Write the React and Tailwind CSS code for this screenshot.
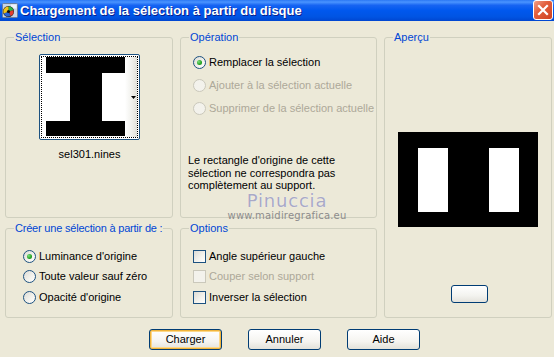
import React from "react";

const font = "font-['Liberation_Sans',Arial,sans-serif]";

function Radio({ checked, disabled }) {
  return (
    <span
      className={`relative flex h-[13px] w-[13px] shrink-0 items-center justify-center rounded-full border ${
        disabled
          ? "border-[#CAC8BB] bg-[#F3F2EC]"
          : "border-[#1C5180] bg-[linear-gradient(135deg,#DCDBD5_0%,#F4F3EE_60%,#FFFFFF_100%)]"
      }`}
    >
      {checked && (
        <span className="h-[5px] w-[5px] rounded-full bg-[radial-gradient(circle_at_35%_35%,#7CE07C_0%,#21A121_60%,#1B8A1B_100%)]" />
      )}
    </span>
  );
}

function Check({ disabled }) {
  return (
    <span
      className={`h-[13px] w-[13px] shrink-0 border ${
        disabled
          ? "border-[#CAC8BB] bg-[#F3F2EC]"
          : "border-[#1C5180] bg-[linear-gradient(135deg,#DCDBD5_0%,#F4F3EE_60%,#FFFFFF_100%)]"
      }`}
    />
  );
}

function Row({ children, label, disabled, className = "" }) {
  return (
    <div className={`flex h-[13px] items-center gap-[3px] ${className}`}>
      {children}
      <span className={`leading-[13px] ${disabled ? "text-[#ACA899]" : "text-black"}`}>{label}</span>
    </div>
  );
}

function Group({ title, className = "", titleClass = "", children }) {
  return (
    <div className={`relative rounded-[3px] border border-[#D0D0BF] ${className}`}>
      <span className={`absolute left-[8px] top-[-7px] bg-[#ECE9D8] px-[1px] leading-[13px] text-[#0046D5] ${titleClass}`}>
        {title}
      </span>
      {children}
    </div>
  );
}

function Btn({ children, def }) {
  return (
    <button
      className={`flex h-[21px] w-[73px] items-center justify-center rounded-[3px] border border-[#003C74] bg-[linear-gradient(to_bottom,#FFFFFF_0%,#F5F4F0_60%,#E3E2DA_100%)] leading-[13px] text-black ${
        def ? "shadow-[inset_0_0_0_1px_#F0B43C,inset_0_0_0_2px_#FDD889]" : ""
      }`}
    >
      {children}
    </button>
  );
}

export default function App() {
  return (
    <div className={`h-[357px] w-[554px] overflow-hidden bg-[#ECE9D8] text-[11px] ${font}`}>
      {/* Title bar */}
      <div className="flex h-[21px] items-start bg-[linear-gradient(to_bottom,#2B78F4_0%,#4A94FF_10%,#1764F2_25%,#0058EE_50%,#0054E3_80%,#0046D0_100%)]">
        <div className="mt-[3px] ml-[2px] h-[15px] w-[16px]">
          <svg width="16" height="15" viewBox="0 0 16 15">
            <rect x="0.5" y="0.5" width="15" height="14" rx="1" fill="#C8D4E6" stroke="#6A7E9E" />
            <rect x="9" y="1.5" width="5.5" height="4" fill="#EEF3FA" />
            <circle cx="6.5" cy="8.5" r="5.5" fill="#1A1A1A" />
            <path d="M6.5 8.5 L6.5 3.5 A5 5 0 0 1 11.3 7.2 Z" fill="#2DB54A" />
            <path d="M6.5 8.5 L11.3 7.2 A5 5 0 0 1 8.5 13.1 Z" fill="#E23C2E" />
            <path d="M6.5 8.5 L8.5 13.1 A5 5 0 0 1 1.8 10.5 Z" fill="#2A64D8" />
            <path d="M6.5 8.5 L1.8 10.5 A5 5 0 0 1 6.5 3.5 Z" fill="#F2C21A" />
            <circle cx="6.5" cy="8.5" r="1.6" fill="#111" />
          </svg>
        </div>
        <div className="ml-[2px] mt-[3px] flex-1 text-[13px] font-bold leading-[15px] tracking-[0px] text-white [text-shadow:1px_1px_0_#0A1E8C]">
          Chargement de la sélection à partir du disque
        </div>
        <div className="mr-[1px] flex h-[20px] w-[20px] items-center justify-center rounded-[3px] border border-white bg-[linear-gradient(135deg,#F0A08A_0%,#E2603E_40%,#D0401E_100%)]">
          <svg width="12" height="12" viewBox="0 0 12 12">
            <path d="M2 2 L10 10 M10 2 L2 10" stroke="white" strokeWidth="2.2" strokeLinecap="square" />
          </svg>
        </div>
      </div>

      {/* Body */}
      <div className="relative pl-[5px] pt-[16px]">
        <div className="grid grid-cols-[168px_197px_168px] grid-rows-[181px_90px] gap-x-[7px] gap-y-[10px]">
          {/* Sélection */}
          <Group title="Sélection" className="flex flex-col items-center pt-[16px]">
            <div className="ml-[1px] h-[86px] w-[101px] rounded-[2px] border border-[#1C5180] bg-white p-[1px]">
              <div className="flex h-full w-full border border-dotted border-black">
                <div className="ml-[4px] flex h-[79px] w-[79px] flex-col bg-white">
                  <div className="h-[16px] bg-black" />
                  <div className="flex h-[48px]">
                    <div className="w-[24px] bg-white" />
                    <div className="w-[32px] bg-black" />
                    <div className="w-[23px] bg-white" />
                  </div>
                  <div className="h-[15px] bg-black" />
                </div>
                <div className="relative flex flex-1 items-center justify-end bg-[linear-gradient(to_right,#FFFFFF_0%,#F2F2EE_50%,#E2E1DA_100%)] pr-[1px]">
                  <svg width="5" height="3" viewBox="0 0 5 3" className="mt-[1px]">
                    <path d="M0 0 H5 L2.5 3 Z" fill="#000" />
                  </svg>
                </div>
              </div>
            </div>
            <div className="mt-[8px] ml-[1px] leading-[13px] text-black">sel301.nines</div>
          </Group>

          {/* Opération */}
          <Group title="Opération" className="flex flex-col pl-[12px] pt-[18px]">
            <Row label="Remplacer la sélection">
              <Radio checked />
            </Row>
            <Row label="Ajouter à la sélection actuelle" disabled className="mt-[10px]">
              <Radio disabled />
            </Row>
            <Row label="Supprimer de la sélection actuelle" disabled className="mt-[10px]">
              <Radio disabled />
            </Row>
            <div className="-ml-[5px] mt-[39px] leading-[12.7px] text-black">
              Le rectangle d'origine de cette
              <br />
              sélection ne correspondra pas
              <br />
              complètement au support.
            </div>
          </Group>

          {/* Aperçu */}
          <Group title="Aperçu" className="row-span-2 flex flex-col items-center pt-[94px]">
            <div className="flex h-[95px] w-[140px] bg-black pt-[16px] pl-[20px]">
              <div className="h-[64px] w-[30px] bg-white" />
              <div className="ml-[41px] h-[64px] w-[30px] bg-white" />
            </div>
            <div className="mt-[58px] ml-[2px] h-[18px] w-[37px] rounded-[3px] border border-[#003C74] bg-[linear-gradient(to_bottom,#FFFFFF_0%,#F3F3EF_60%,#E4E3DC_100%)]" />
          </Group>

          {/* Créer */}
          <Group
            title="Créer une sélection à partir de :"
            titleClass="tracking-[-0.2px]"
            className="flex flex-col pl-[17px] pt-[21px]"
          >
            <Row label="Luminance d'origine">
              <Radio checked />
            </Row>
            <Row label="Toute valeur sauf zéro" className="mt-[7px]">
              <Radio />
            </Row>
            <Row label="Opacité d'origine" className="mt-[8px]">
              <Radio />
            </Row>
          </Group>

          {/* Options */}
          <Group title="Options" className="flex flex-col pl-[12px] pt-[21px]">
            <Row label="Angle supérieur gauche">
              <Check />
            </Row>
            <Row label="Couper selon support" disabled className="mt-[7px]">
              <Check disabled />
            </Row>
            <Row label="Inverser la sélection" className="mt-[8px]">
              <Check />
            </Row>
          </Group>
        </div>

        {/* Buttons */}
        <div className="mt-[11px] flex gap-[26px] pl-[144px]">
          <Btn def>Charger</Btn>
          <Btn>Annuler</Btn>
          <Btn>Aide</Btn>
        </div>

        {/* Watermark */}
        <div className="pointer-events-none absolute left-[222px] top-[171px] flex w-[130px] flex-col items-center">
          <span className="font-['DejaVu_Sans',sans-serif] text-[18px] leading-[18px] tracking-[0.8px] text-[#A9A9C6] [text-shadow:0_0_1px_#ffffff]">
            Pinuccia
          </span>
          <span className="font-['DejaVu_Sans',sans-serif] text-[10px] leading-[12px] tracking-[0.2px] text-[#8C8C8C]">
            www.maidiregrafica.eu
          </span>
        </div>
      </div>
    </div>
  );
}
